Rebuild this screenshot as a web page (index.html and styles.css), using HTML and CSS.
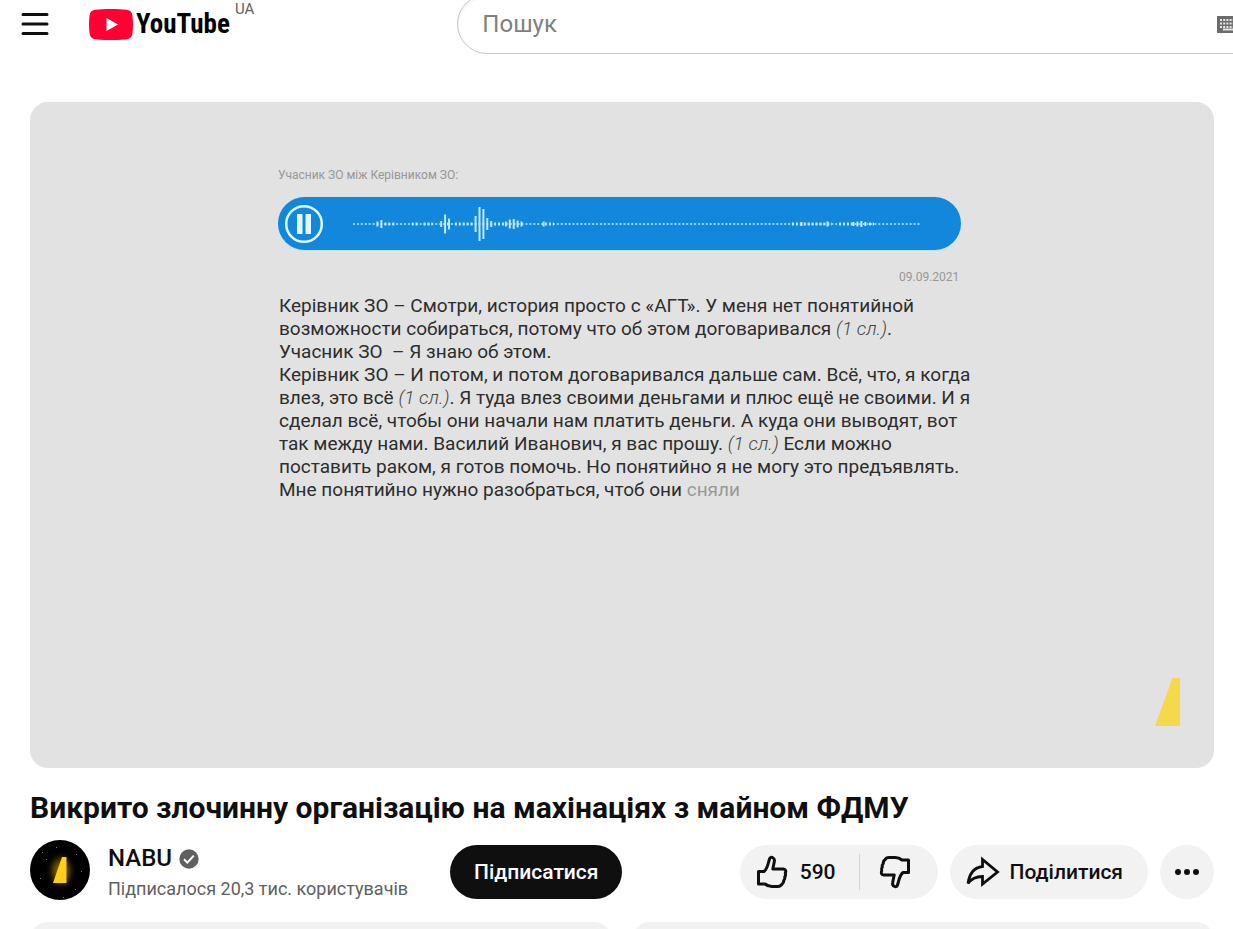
FILE: index.html
```html
<!DOCTYPE html>
<html lang="uk">
<head>
    <meta charset="UTF-8">
    <meta name="viewport" content="width=device-width, initial-scale=1.0">
    <title>Викрито злочинну організацію на махінаціях з майном ФДМУ</title>
    <link rel="stylesheet" href="styles.css">
</head>
<body>
    <header class="masthead">
        <button class="menu-btn" aria-label="Меню">
            <svg width="28" height="24" viewBox="0 0 28 24" fill="none" stroke="#0f0f0f" stroke-width="3" stroke-linecap="round"><path d="M2 2.500h24M2 12h24M2 21.500h24"/></svg>
        </button>
        <a class="logo" href="#">
            <svg width="44" height="31" viewBox="0 0 44 31"><path fill="#f03" d="M22 0c-6 0-12 .2-16 .8C2.500 1.400 1 3.200.600 6.500-.2 12.500-.2 18.500.600 24.500 1 27.800 2.500 29.600 6 30.200c8 1.100 24 1.100 32 0 3.500-.6 5-2.400 5.400-5.700.8-6 .8-12 0-18C43 3.200 41.500 1.400 38 .8 34 .2 28 0 22 0z"/><path fill="#fff" d="M17.500 9v13L29 15.500z"/></svg>
            <span class="logo-text">YouTube</span>
        </a>
        <span class="country">UA</span>
        <form class="search">
            <input type="text" class="search-input" placeholder="Пошук" aria-label="Пошук">
            <svg width="25" height="17" viewBox="0 0 25 17"><path fill="#6b6b6b" d="M0 0h25v17H0z"/><path stroke="#e4e4e4" stroke-width="2" stroke-dasharray="2 1.200" d="M3 4h20M3 7.500h20M3 11h20"/><path stroke="#e4e4e4" stroke-width="2" d="M6 13.500h13"/></svg>
        </form>
    </header>

    <main class="watch">
        <div class="player">
            <p class="call-title">Учасник ЗО між Керівником ЗО:</p>
            <div class="audio">
                <button class="pause-btn" aria-label="Пауза">
                    <svg width="40" height="40" viewBox="0 0 40 40"><circle cx="20" cy="20" r="17.800" fill="none" stroke="#e2f8ff" stroke-width="2.500"/><path fill="#e2f8ff" d="M13 10h5.500v20H13zM21.500 10H27v20h-5.500z"/></svg>
                </button>
                <svg class="wave" width="567" height="36" viewBox="0 0 567 36" fill="none" stroke="#bdeaff" stroke-width="2">
                    <path stroke-width="1.500" stroke-dasharray="2 1.920" d="M0 18h567"/>
                    <path stroke-width="3" stroke-dasharray="2 1.920" d="M31.400 18h11M58.800 18h7M70.600 18h9M94 18h4M101.900 18h18M141.100 18h11M192 18h9M439 18h40M486.100 18h14M516 18h5"/>
                    <path d="M24.500 15.500v5M28.400 14v8M88.200 15v6M92.100 8.500v19M96 12.500v11M122.600 10v16M126.500 1v34M130.400 3v30M134.300 12v12M138.200 15v6M152.900 15.500v5M156.800 13.500v9M160.700 13v10M164.600 14.500v7M168.500 15.500v5M190.600 15.500v5M448.500 16v4M474.500 15.500v5M500.500 16v4M504.500 15.500v5M508.400 15v6M512.300 16v4"/>
                </svg>
            </div>
            <time class="call-date">09.09.2021</time>
            <p class="transcript">
                Керівник ЗО – Смотри, история просто с «АГТ». У меня нет понятийной<br>
                возможности собираться, потому что об этом договаривался <i>(1 сл.)</i>.<br>
                Учасник ЗО&nbsp; – Я знаю об этом.<br>
                Керівник ЗО – И потом, и потом договаривался дальше сам. Всё, что, я когда<br>
                влез, это всё <i>(1 сл.)</i>. Я туда влез своими деньгами и плюс ещё не своими. И я<br>
                сделал всё, чтобы они начали нам платить деньги. А куда они выводят, вот<br>
                так между нами. Василий Иванович, я вас прошу. <i>(1 сл.)</i> Если можно<br>
                поставить раком, я готов помочь. Но понятийно я не могу это предъявлять.<br>
                Мне понятийно нужно разобраться, чтоб они <span class="fading">сняли</span>
            </p>
            <svg class="watermark" width="25" height="48" viewBox="0 0 25 48"><path fill="#f5d94a" d="M17.500 0H25v48H0z"/></svg>
        </div>

        <h1 class="title">Викрито злочинну організацію на махінаціях з майном ФДМУ</h1>

        <div class="meta">
            <a class="avatar" href="#" aria-label="NABU">
                <svg width="60" height="60" viewBox="0 0 60 60">
                    <defs>
                        <radialGradient id="glow"><stop offset="0" stop-color="#b88a00"/><stop offset=".5" stop-color="#5c4400" stop-opacity=".8"/><stop offset="1" stop-color="#000" stop-opacity="0"/></radialGradient>
                    </defs>
                    <circle cx="30" cy="30" r="30" fill="#000"/>
                    <ellipse cx="31" cy="31" rx="16" ry="21" fill="url(#glow)"/>
                    <path fill="#ffce1a" d="M32 17h4.500v26H23z"/>
                    <path fill="#777" d="M16 19h1v1h-1zM12 12h1v1h-1zM46 14h1v1h-1zM51 31h1v1h-1zM33 57h1v1h-1zM10 38h1v1h-1zM26 7h1v1h-1zM45 49h1v1h-1z"/>
                </svg>
            </a>
            <div class="channel">
                <a class="channel-name" href="#">NABU
                    <svg width="20" height="20" viewBox="0 0 20 20"><circle cx="10" cy="10" r="9.700" fill="#606060"/><path d="M5 10.300l3.300 3.300 6.500-7" fill="none" stroke="#fff" stroke-width="2"/></svg>
                </a>
                <span class="subs">Підписалося 20,3 тис. користувачів</span>
            </div>
            <button class="btn subscribe-btn">Підписатися</button>
            <div class="actions">
                <div class="rating">
                    <button class="btn like-btn">
                        <svg width="32" height="34" viewBox="0 0 32 34" fill="none" stroke="#0f0f0f" stroke-width="3" stroke-linejoin="round"><path d="M2.500 16.500H8c2.500-2 3.500-5 4.500-9l1-3.500c.5-1.800 2-2 3.300-1.300 1.500.8 1.900 2.300 1.500 4l-1.500 7.300h10.500c2.300.3 3 2.200 2 4.200.5 1.500.3 2.600-.6 3.800.4 1.500 0 2.500-1 3.500.2 1.600-.4 2.800-1.700 3.700-.8 1.600-2 2.300-4 2.300h-6c-3 0-4.800-.6-7-2.500H2.500z"/></svg>
                        590
                    </button>
                    <button class="btn dislike-btn" aria-label="Не подобається">
                        <svg width="32" height="34" viewBox="0 0 32 34" fill="none" stroke="#0f0f0f" stroke-width="3" stroke-linejoin="round"><path d="M29.500 17.500H24c-2.500 2-3.500 5-4.500 9l-1 3.500c-.5 1.800-2 2-3.300 1.300-1.500-.8-1.900-2.300-1.500-4l1.500-7.300H4.700c-2.300-.3-3-2.200-2-4.200-.5-1.500-.3-2.600.6-3.800-.4-1.500 0-2.500 1-3.500-.2-1.600.4-2.800 1.700-3.700C6.800 3.200 8 2.500 10 2.500h6c3 0 4.800.6 7 2.500h6.500z"/></svg>
                    </button>
                </div>
                <button class="btn share-btn">
                    <svg width="34" height="32" viewBox="0 0 34 32" fill="none" stroke="#0f0f0f" stroke-width="2.800"><path d="M16.500 3.500v7C8 11.500 3.500 17 2 27.500c3.500-5 8-7 14.500-7v7.500L31.500 16z"/></svg>
                    Поділитися
                </button>
                <button class="btn more-btn" aria-label="Інші дії">
                    <svg width="26" height="8" viewBox="0 0 26 8" fill="#0f0f0f"><circle cx="4" cy="4" r="3"/><circle cx="13" cy="4" r="3"/><circle cx="22" cy="4" r="3"/></svg>
                </button>
            </div>
        </div>

        <div class="cards">
            <div class="card"></div>
            <div class="card"></div>
        </div>
    </main>
</body>
</html>
```
FILE: styles.css
```css
* {
    box-sizing: border-box;
}
body {
    margin: 0;
    height: 100vh;
    overflow: hidden;
    background-color: #fff;
    color: #0f0f0f;
    font-family: Roboto, "Noto Sans", sans-serif;
}
button {
    padding: 0;
    border: none;
    background: none;
    color: inherit;
    font-family: inherit;
    cursor: pointer;
}
a {
    color: inherit;
    text-decoration: none;
}
svg {
    display: block;
    flex: none;
}
.masthead {
    display: flex;
    align-items: center;
    height: 48px;
    padding-left: 21px;
}
.logo {
    display: flex;
    align-items: center;
    gap: 3px;
    width: 140px;
    margin-left: 40px;
}
.logo-text {
    color: #000;
    font-family: "Roboto Condensed", Roboto, sans-serif;
    font-size: 27px;
    font-weight: 700;
    line-height: 32px;
}
.country {
    align-self: flex-start;
    margin-left: 6px;
    color: #606060;
    font-size: 15px;
    line-height: 18px;
}
.search {
    display: flex;
    flex: 1;
    align-items: center;
    height: 60px;
    margin-left: 203px;
    margin-right: -80px;
    padding: 0 70px 0 24px;
    border: 1px solid #c6c6c6;
    border-radius: 30px;
    box-shadow: inset 0 2px 3px #eee;
}
.search-input {
    flex: 1;
    min-width: 0;
    padding: 0;
    border: none;
    outline: none;
    background: none;
    font-family: inherit;
    font-size: 24px;
}
.search-input::placeholder {
    color: #808080;
}
.watch {
    padding: 54px 19px 0 30px;
}
.player {
    position: relative;
    aspect-ratio: 16 / 9;
    padding: 65px 0 0 248px;
    border-radius: 18px;
    background-color: #e2e2e2;
}
.call-title {
    margin: 0 0 14px;
    color: #979797;
    font-size: 12px;
    line-height: 16px;
}
.audio {
    display: flex;
    align-items: center;
    gap: 29px;
    width: 73%;
    height: 53px;
    padding-left: 6px;
    border-radius: 27px;
    background-color: #1287dc;
    box-shadow: 0 1px 0 #c3e3f8;
}
.call-date {
    display: block;
    width: 73%;
    margin: 19px 0 9px;
    padding-right: 2px;
    color: #979797;
    font-size: 12px;
    line-height: 16px;
    text-align: right;
}
.transcript {
    margin: 0;
    padding-left: 1px;
    color: #2d2d2d;
    font-size: 19px;
    line-height: 23px;
    white-space: nowrap;
}
.transcript i {
    color: #444;
    font-weight: 300;
}
.fading {
    color: #999;
}
.watermark {
    position: absolute;
    right: 34px;
    bottom: 42px;
}
.title {
    margin: 19px 0 11px;
    font-size: 30px;
    font-weight: 700;
    line-height: 42px;
}
.meta {
    display: flex;
    align-items: center;
}
.avatar {
    margin-bottom: 4px;
}
.channel {
    margin-left: 18px;
}
.channel-name {
    display: flex;
    align-items: center;
    gap: 7px;
    font-size: 24px;
    font-weight: 500;
    line-height: 33px;
}
.subs {
    display: block;
    color: #606060;
    font-size: 18px;
    line-height: 27px;
}
.btn {
    display: flex;
    align-items: center;
    height: 54px;
    border-radius: 27px;
    font-size: 21px;
    font-weight: 500;
}
.subscribe-btn {
    margin-left: 42px;
    padding: 0 24px;
    background-color: #0f0f0f;
    color: #fff;
}
.actions {
    display: flex;
    gap: 12px;
    margin-left: auto;
}
.rating, .share-btn, .more-btn {
    background-color: #f2f2f2;
}
.rating {
    display: flex;
    align-items: center;
    border-radius: 27px;
}
.like-btn {
    gap: 12px;
    padding: 0 23px 0 16px;
}
.dislike-btn {
    padding: 0 27px 0 19px;
}
.dislike-btn::before {
    content: "";
    width: 1px;
    height: 36px;
    margin: 0 19px 0 -19px;
    background-color: #d4d4d4;
}
.share-btn {
    gap: 10px;
    padding: 0 25px 0 16px;
}
.more-btn {
    justify-content: center;
    width: 54px;
}
.cards {
    display: grid;
    grid-template-columns: 1fr 1fr;
    gap: 20px;
    margin-top: 18px;
}
.card {
    height: 120px;
    border-radius: 18px;
    background-color: #f2f2f2;
}
```
